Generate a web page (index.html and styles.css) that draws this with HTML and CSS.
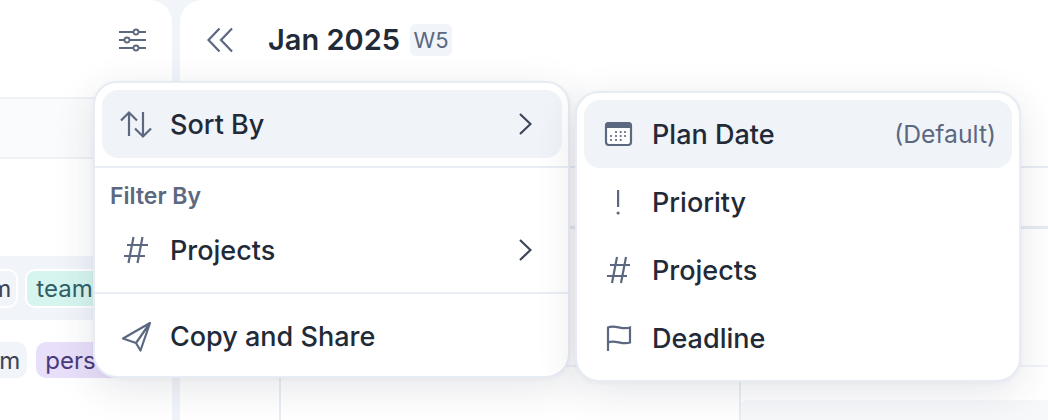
FILE: index.html
```html
<!DOCTYPE html>
<html lang="en">
<head>
<meta charset="utf-8">
<title>Calendar view options</title>
<link rel="stylesheet" href="styles.css">
</head>
<body>
<div class="app">
  <aside class="side">
    <div class="side-head">
      <svg class="i-sliders" width="28" height="24" viewBox="0 0 28 24" fill="none" stroke="#5b6880" stroke-width="1.8">
        <path d="M1 4H28M1 12H28M1 20H28"/>
        <circle cx="18" cy="4" r="2.5" fill="#fff"/>
        <circle cx="9" cy="12" r="2.5" fill="#fff"/>
        <circle cx="18" cy="20" r="2.5" fill="#fff"/>
      </svg>
    </div>
    <div class="side-band"></div>
    <div class="chip-row tinted">
      <span class="chip chip-plain outlined">team</span>
      <span class="chip chip-teal outlined">team</span>
    </div>
    <div class="chip-row second">
      <span class="chip chip-plain shifted">team</span>
      <span class="chip chip-purple">personal</span>
    </div>
  </aside>

  <main class="board">
    <header class="board-head">
      <svg class="i-back" width="26" height="26" viewBox="0 0 26 26" fill="none" stroke="#5b6880" stroke-width="2.2">
        <path d="M12.5 1.5 1.5 13l11 11.500M25 1.500 14 13l11 11.500"/>
      </svg>
      <h1 class="title">Jan 2025</h1>
      <span class="week">W5</span>
    </header>
    <div class="row-a"></div>
    <div class="row-b"></div>
    <div class="row-c">
      <div class="col-a"></div>
      <div class="col-b"></div>
      <div class="col-c"><div class="slot"></div></div>
    </div>
  </main>

  <div class="menu menu-main">
    <div class="section first">
      <div class="item active">
        <svg class="icon" viewBox="0 0 40 40" fill="none" stroke="#5b6880" stroke-width="2.2">
          <path d="M13 32V8.500M5 16.500l8-8 8 8M27 8v24.500M19 24.500l8 8 8-8"/>
        </svg>
        <span class="label">Sort By</span>
        <svg class="chev" width="14" height="22" viewBox="0 0 14 22" fill="none" stroke="#3b4557" stroke-width="2.2"><path d="M2 1l10.500 10L2 21"/></svg>
      </div>
    </div>
    <div class="section second-section">
      <div class="caption">Filter By</div>
      <div class="item">
        <svg class="icon" viewBox="0 0 40 40" fill="none" stroke="#5b6880" stroke-width="2.2">
          <path d="M11 15H32M8 26H29M17.500 7l-5 26M26.500 7l-5 26"/>
        </svg>
        <span class="label">Projects</span>
        <svg class="chev" width="14" height="22" viewBox="0 0 14 22" fill="none" stroke="#3b4557" stroke-width="2.2"><path d="M2 1l10.500 10L2 21"/></svg>
      </div>
    </div>
    <div class="section last">
      <div class="item">
        <svg class="icon" viewBox="0 0 40 40" fill="none" stroke="#5b6880" stroke-width="2.2" stroke-linejoin="round">
          <path d="M34 7 7 22.500l13 4.500 4.500 7.500zM34 7 20 27"/>
        </svg>
        <span class="label">Copy and Share</span>
      </div>
    </div>
  </div>

  <div class="menu menu-sub">
    <div class="item active">
      <svg class="icon" viewBox="0 0 40 40">
        <rect x="8" y="9" width="25" height="22" rx="3" fill="#fff" stroke="#5b6880" stroke-width="2.200"/>
        <path d="M7 12a4 4 0 0 1 4-4h19a4 4 0 0 1 4 4v2H7z" fill="#5b6880"/>
        <g fill="#5b6880">
          <circle cx="18" cy="18" r="1.100"/><circle cx="22.700" cy="18" r="1.100"/><circle cx="27" cy="18" r="1.100"/>
          <circle cx="13" cy="22" r="1.100"/><circle cx="18" cy="22" r="1.100"/><circle cx="22.700" cy="22" r="1.100"/><circle cx="27" cy="22" r="1.100"/>
          <circle cx="13" cy="26" r="1.100"/><circle cx="18" cy="26" r="1.100"/><circle cx="22.700" cy="26" r="1.100"/>
        </g>
      </svg>
      <span class="label">Plan Date</span>
      <span class="hint">(Default)</span>
    </div>
    <div class="item">
      <svg class="icon" viewBox="0 0 40 40" fill="#5b6880">
        <rect x="19" y="8" width="2.200" height="17"/>
        <circle cx="20.100" cy="31" r="1.600"/>
      </svg>
      <span class="label">Priority</span>
    </div>
    <div class="item">
      <svg class="icon" viewBox="0 0 40 40" fill="none" stroke="#5b6880" stroke-width="2.2">
        <path d="M12 15H32M9 26H29M19 7l-5 26M28 7l-5 26"/>
      </svg>
      <span class="label">Projects</span>
    </div>
    <div class="item">
      <svg class="icon" viewBox="0 0 40 40" fill="none" stroke="#5b6880" stroke-width="2.2">
        <path d="M10 33V9.500c7-3.500 14 3 22 0v15c-8 3-15-3.500-22 0"/>
      </svg>
      <span class="label">Deadline</span>
    </div>
  </div>
</div>
</body>
</html>
```
FILE: styles.css
```css
* { box-sizing: border-box; }
html, body { margin: 0; height: 100%; }
body {
  font-family: Inter, "Liberation Sans", sans-serif;
  color: #222a38;
  background: #f1f4f9;
  overflow: hidden;
}
.app {
  position: relative;
  display: flex;
  gap: 8px;
  width: 1048px;
  height: 420px;
  overflow: hidden;
}

/* sidebar */
.side {
  width: 172px;
  height: 420px;
  background: #fff;
  border-top-right-radius: 22px;
  overflow: hidden;
  flex: none;
}
.side-head {
  height: 97px;
  display: flex;
  justify-content: flex-end;
  padding: 28px 26px 0 0;
}
.side-band {
  height: 62px;
  background: #fafbfc;
  border-top: 2px solid #eef1f6;
  border-bottom: 2px solid #eef1f6;
}
.chip-row {
  display: flex;
  align-items: center;
  gap: 7px;
  height: 64px;
  white-space: nowrap;
  font-size: 24px;
}
.tinted { margin-top: 97px; background: #f1f4f9; }
.second { height: 58px; gap: 9px; padding-top: 22px; }
.chip {
  display: inline-flex;
  align-items: center;
  height: 36px;
  padding: 0 9px;
  border-radius: 10px;
  flex: none;
}
.outlined { height: 39px; border: 2px solid #fff; }
.chip-plain { background: #f1f4f9; color: #3b4557; margin-left: -54px; padding: 0 5px 0 7px; }
.shifted { margin-left: -43px; padding: 0 7px; }
.chip-teal { background: #d6f5ef; color: #2f5f66; }
.chip-purple { background: #e8dffa; color: #4a3a7a; }

/* board */
.board {
  flex: 1;
  display: flex;
  flex-direction: column;
  background: #fff;
  border-top-left-radius: 22px;
  overflow: hidden;
}
.board-head {
  flex: none;
  height: 168px;
  display: flex;
  align-items: flex-start;
  padding: 27px 0 0 27px;
  border-bottom: 2px solid #e9edf4;
}
.i-back { flex: none; }
.title {
  margin: -6px 0 0 35px;
  font-size: 29px;
  line-height: 38px;
  font-weight: 600;
  color: #222a38;
}
.week {
  margin: -3px 0 0 10px;
  width: 42px;
  height: 32px;
  display: flex;
  align-items: center;
  justify-content: center;
  border-radius: 6px;
  background: #f1f4f9;
  color: #5b6880;
  font-size: 22px;
}
.row-a { flex: none; height: 61px; border-bottom: 3px solid #e6eaf2; }
.row-b { flex: none; height: 138px; border-bottom: 2px solid #f1f4f9; }
.row-c { flex: none; height: 53px; display: flex; }
.col-a { width: 99px; }
.col-b { width: 462px; border-left: 2px solid #e9edf4; border-right: 2px solid #e9edf4; }
.col-c { flex: 1; padding-top: 33px; }
.slot { height: 20px; background: #f7f8fa; border-radius: 6px 0 0 0; }

/* menus */
.menu {
  position: absolute;
  background: #fff;
  border: 2px solid #e6ebf4;
  border-radius: 24px;
  box-shadow: 0 1px 4px rgba(40, 50, 70, .04), 0 10px 40px rgba(40, 50, 70, .12);
}
.menu-main { left: 93px; top: 81px; width: 477px; height: 297px; }
.menu-sub { left: 575px; top: 91px; width: 446px; height: 291px; padding: 7px; }
.section { padding: 0 6px 0 7px; }
.section.first { padding-top: 7px; padding-bottom: 8px; border-bottom: 2px solid #e9eef6; }
.second-section { padding-bottom: 8px; border-bottom: 2px solid #e9eef6; }
.section.last { padding-top: 8px; }
.caption {
  height: 48px;
  padding: 16px 0 0 8px;
  font-size: 23px;
  line-height: 24px;
  font-weight: 600;
  color: #5b6880;
}
.item {
  display: flex;
  align-items: center;
  height: 68px;
  padding: 0 16px 0 14px;
  border-radius: 16px;
}
.item.active { background: #f0f3f8; }
.icon { width: 40px; height: 40px; flex: none; }
.label {
  margin-left: 14px;
  font-size: 27px;
  font-weight: 450;
  color: #222a38;
}
.chev { margin-left: auto; margin-right: 14px; flex: none; }
.hint {
  margin-left: auto;
  font-size: 24.7px;
  color: #5b6880;
}
```
